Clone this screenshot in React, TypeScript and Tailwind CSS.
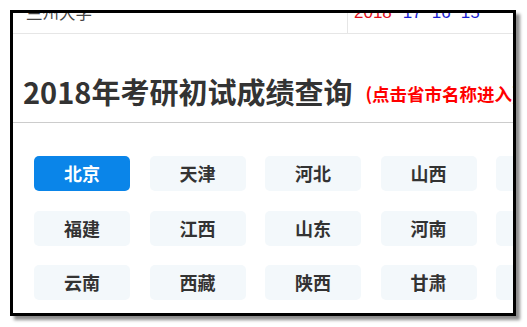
import React from 'react';

const provinces = [
    '北京', '天津', '河北', '山西', '内蒙古', '辽宁', '吉林', '黑龙江', '上海', '江苏', '浙江', '安徽',
    '福建', '江西', '山东', '河南', '湖北', '湖南', '广东', '广西', '海南', '重庆', '四川', '贵州',
    '云南', '西藏', '陕西', '甘肃', '青海', '宁夏', '新疆', '', '', '', '', '',
];

const font = { fontFamily: '"Noto Sans CJK SC", "Noto Sans", sans-serif' };

export default function App() {
    return (
        <div className="w-[527px] h-[327px] bg-white pt-[10px] pl-[10px]" style={font}>
            <div className="w-[506px] h-[306px] border-[3px] border-black bg-white overflow-hidden shadow-[4px_4px_3px_rgba(0,0,0,0.45)]">
                {/* top bar, scrolled so the text is cut */}
                <div className="h-[21px] flex border-b border-[#e6e6e6] overflow-hidden">
                    <div className="w-[335px] pl-[13px] border-r border-[#e6e6e6]">
                        <div className="-mt-[9px] text-[16.5px] leading-[16px] text-[#444]">兰州大学</div>
                    </div>
                    <div className="pl-[6px]">
                        <div className="-mt-[8px] text-[17px] leading-[16px] whitespace-nowrap flex" style={{ fontFamily: '"Liberation Sans", sans-serif' }}>
                            <span className="text-[#e0101a]">2018</span>
                            <span className="text-[#1b1fd0] ml-[11px]">17</span>
                            <span className="text-[#1b1fd0] ml-[10px]">16</span>
                            <span className="text-[#1b1fd0] ml-[10px]">15</span>
                        </div>
                    </div>
                </div>

                {/* title */}
                <div className="h-[89px] flex items-end pb-[13px] pl-[10px] border-b border-[#cccccc] whitespace-nowrap overflow-hidden">
                    <span className="text-[29px] leading-[36px] font-bold text-[#333]">2018年考研初试成绩查询</span>
                    <span className="ml-[13px] mb-[4px] text-[17.5px] leading-[22px] font-bold text-[#f00]">(点击省市名称进入)</span>
                </div>

                {/* province grid */}
                <div className="pt-[33px] pl-[21px] overflow-hidden">
                    <div className="grid grid-cols-[repeat(12,96px)] gap-x-[19.5px] gap-y-[19.5px] w-max">
                        {provinces.map((p, i) => (
                            <div
                                key={i}
                                className={
                                    i === 0
                                        ? 'h-[35px] rounded-[5px] bg-[#0a85e9] text-white text-[18px] font-bold flex items-center justify-center'
                                        : 'h-[35px] rounded-[5px] bg-[#f3f8fb] text-[#333] text-[18px] font-bold flex items-center justify-center'
                                }
                            >
                                {p}
                            </div>
                        ))}
                    </div>
                </div>
            </div>
        </div>
    );
}
